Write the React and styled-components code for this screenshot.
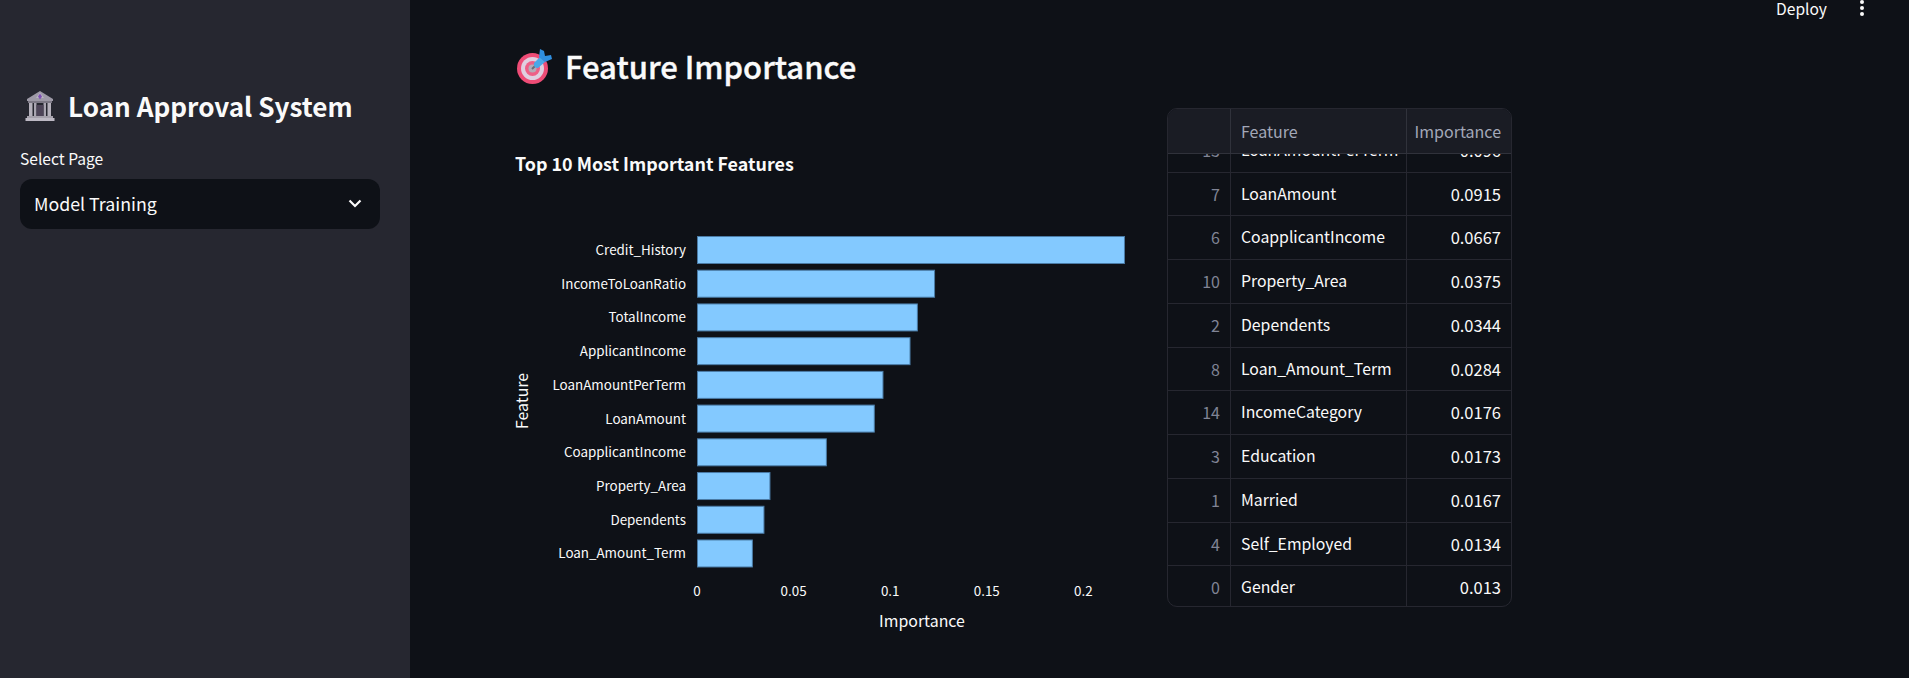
import React from "react";
import styled, { createGlobalStyle } from "styled-components";

const FONT = `"Noto Sans CJK SC", "Noto Sans", sans-serif`;

const features = [
  { name: "Credit_History", value: 0.221 },
  { name: "IncomeToLoanRatio", value: 0.1227 },
  { name: "TotalIncome", value: 0.1138 },
  { name: "ApplicantIncome", value: 0.11 },
  { name: "LoanAmountPerTerm", value: 0.096 },
  { name: "LoanAmount", value: 0.0915 },
  { name: "CoapplicantIncome", value: 0.0667 },
  { name: "Property_Area", value: 0.0375 },
  { name: "Dependents", value: 0.0344 },
  { name: "Loan_Amount_Term", value: 0.0284 },
];

const ticks = ["0", "0.05", "0.1", "0.15", "0.2"];

const rows = [
  [13, "LoanAmountPerTerm", "0.096"],
  [7, "LoanAmount", "0.0915"],
  [6, "CoapplicantIncome", "0.0667"],
  [10, "Property_Area", "0.0375"],
  [2, "Dependents", "0.0344"],
  [8, "Loan_Amount_Term", "0.0284"],
  [14, "IncomeCategory", "0.0176"],
  [3, "Education", "0.0173"],
  [1, "Married", "0.0167"],
  [4, "Self_Employed", "0.0134"],
  [0, "Gender", "0.013"],
];

const BankIcon = () => (
  <Emoji width="32" height="32" viewBox="0 0 32 32">
    <path d="M16 1 L29 9 L29 11 L3 11 L3 9 Z" fill="#9d99a6" />
    <path d="M16 2.5 L20 8 L12 8 Z" fill="#b9b5c0" />
    <path d="M16 3.5 L18 6.5 L16 9.5 L14 6.5 Z" fill="#7d4fb0" />
    <rect x="4" y="11" width="24" height="2" fill="#7c7885" />
    <rect x="5" y="13" width="3.5" height="13" fill="#b5b1bc" />
    <rect x="10" y="13" width="2.5" height="13" fill="#a9a5b1" />
    <rect x="19.5" y="13" width="2.5" height="13" fill="#a9a5b1" />
    <rect x="23.5" y="13" width="3.5" height="13" fill="#b5b1bc" />
    <rect x="12.5" y="15" width="7" height="11" fill="#4d4458" />
    <rect x="3" y="26" width="26" height="2" fill="#a5a1ac" />
    <rect x="1.5" y="28" width="29" height="3" fill="#bdb9c4" />
  </Emoji>
);

const TargetIcon = () => (
  <Emoji width="36" height="36" viewBox="0 0 36 36">
    <circle cx="15.5" cy="20.5" r="15.5" fill="#ee4c76" />
    <circle cx="15.5" cy="20.5" r="11.5" fill="#e0cfe0" />
    <circle cx="15.5" cy="20.5" r="7.5" fill="#ee5f86" />
    <circle cx="15.5" cy="20.5" r="4" fill="#b5abb8" />
    <path d="M15 21 L24 12" stroke="#6b6b78" strokeWidth="2" />
    <path d="M17 15 L23 9 L28 14 L21 20 Q16 20 17 15 Z" fill="#4aa8e8" />
    <path d="M22 9 L23 1 L27 3 L28 8 L34 7 L35 11 L28 14 Z" fill="#2f8fe0" />
  </Emoji>
);

const Chevron = () => (
  <svg width="20" height="20" viewBox="0 0 20 20" fill="none">
    <path d="M4.5 7.5 L10 13 L15.5 7.5" stroke="#fafafa" strokeWidth="2.2" />
  </svg>
);

const MenuDots = () => (
  <svg width="6" height="16" viewBox="0 0 6 16">
    <circle cx="3" cy="2" r="2" fill="#fafafa" />
    <circle cx="3" cy="8" r="2" fill="#fafafa" />
    <circle cx="3" cy="14" r="2" fill="#fafafa" />
  </svg>
);

// chart is 630 wide, bars start at X0 inside it
const X0 = 182;
const PER_UNIT = 1932;

const ImportanceChart = () => (
  <svg width="630" height="450" viewBox="0 0 630 450">
    <text className="axis-title" transform="translate(13 211) rotate(-90)" textAnchor="middle">
      Feature
    </text>
    {features.map((f, i) => {
      const y = 46.5 + i * 33.72;
      return (
        <g key={f.name}>
          <text x={X0 - 11} y={y + 18.5} textAnchor="end">
            {f.name}
          </text>
          <rect
            x={X0 + 0.5}
            y={y}
            width={f.value * PER_UNIT}
            height={27}
            fill="#83c9ff"
            stroke="#4a7ba6"
          />
        </g>
      );
    })}
    {ticks.map((t, i) => (
      <text key={t} x={X0 + i * 96.6} y={406} textAnchor="middle">
        {t}
      </text>
    ))}
    <text className="axis-title" x={407} y={437} textAnchor="middle">
      Importance
    </text>
  </svg>
);

export default function App() {
  return (
    <>
      <GlobalStyle />
      <Page>
        <Sidebar>
          <SideTitle>
            <BankIcon />
            Loan Approval System
          </SideTitle>
          <FieldLabel>Select Page</FieldLabel>
          <Select>
            Model Training
            <Chevron />
          </Select>
        </Sidebar>
        <Main>
          <Toolbar>
            <DeployLabel>Deploy</DeployLabel>
            <MenuDots />
          </Toolbar>
          <Content>
            <Title>
              <TargetIcon />
              Feature Importance
            </Title>
            <Columns>
              <ChartColumn>
                <ChartHeading>Top 10 Most Important Features</ChartHeading>
                <ChartBox>
                  <ImportanceChart />
                </ChartBox>
              </ChartColumn>
              <Table>
                <HeaderRow>
                  <HeadCell />
                  <HeadCell>Feature</HeadCell>
                  <HeadCell $right>Importance</HeadCell>
                </HeaderRow>
                <TableBody>
                  <TableRows>
                    {rows.map(([idx, name, value]) => (
                      <Row key={idx}>
                        <IndexCell>{idx}</IndexCell>
                        <Cell>{name}</Cell>
                        <Cell $right>{value}</Cell>
                      </Row>
                    ))}
                  </TableRows>
                </TableBody>
              </Table>
            </Columns>
          </Content>
        </Main>
      </Page>
    </>
  );
}

const GlobalStyle = createGlobalStyle`
  html, body {
    margin: 0;
    padding: 0;
    background: #0e1117;
  }
  body {
    font-family: ${FONT};
    color: #fafafa;
  }
`;

const Emoji = styled.svg`
  flex-shrink: 0;
`;

const Page = styled.div`
  display: flex;
  width: 1909px;
  height: 678px;
  overflow: hidden;
  background: #0e1117;
`;

const Sidebar = styled.aside`
  width: 410px;
  flex-shrink: 0;
  box-sizing: border-box;
  padding: 88px 30px 0 20px;
  background: #262730;
`;

const SideTitle = styled.h2`
  display: flex;
  align-items: center;
  gap: 12px;
  margin: 0 0 22px 4px;
  height: 36px;
  font-size: 26.1px;
  font-weight: 700;
  line-height: 36px;
  white-space: nowrap;
`;

const FieldLabel = styled.div`
  height: 25px;
  font-size: 15.6px;
  line-height: 25px;
`;

const Select = styled.div`
  display: flex;
  align-items: center;
  justify-content: space-between;
  height: 50px;
  box-sizing: border-box;
  margin-top: 8px;
  padding: 0 15px 2px 14px;
  border-radius: 12px;
  background: #0e1117;
  font-size: 17.8px;
`;

const Main = styled.main`
  flex: 1;
  min-width: 0;
`;

const Toolbar = styled.div`
  display: flex;
  align-items: center;
  justify-content: flex-end;
  gap: 32px;
  height: 16px;
  padding-right: 44px;
`;

const DeployLabel = styled.span`
  margin-top: -1px;
  font-size: 15.6px;
  line-height: 16px;
`;

const Content = styled.div`
  padding: 32px 0 0 105px;
`;

const Title = styled.h1`
  display: flex;
  align-items: center;
  gap: 12px;
  height: 36px;
  margin: 0 0 0 2px;
  font-size: 31px;
  font-weight: 500;
  -webkit-text-stroke: 0.4px #fafafa;
  line-height: 36px;
`;

const Columns = styled.div`
  display: flex;
  gap: 22px;
  margin-top: 24px;
`;

const ChartColumn = styled.div`
  width: 630px;
`;

const ChartHeading = styled.h3`
  margin: 44px 0 0;
  height: 22px;
  font-size: 17.9px;
  font-weight: 700;
  line-height: 22px;
`;

const ChartBox = styled.div`
  margin-top: 16px;

  svg {
    display: block;
  }

  text {
    fill: #fafafa;
    font-family: ${FONT};
    font-size: 13.4px;
  }

  text.axis-title {
    font-size: 15.9px;
  }
`;

const Table = styled.div`
  display: flex;
  flex-direction: column;
  width: 345px;
  height: 499px;
  box-sizing: border-box;
  border: 1px solid #262730;
  border-radius: 10px;
  overflow: hidden;
`;

const gridColumns = `grid-template-columns: 63px 176px 1fr;`;

const HeaderRow = styled.div`
  display: grid;
  ${gridColumns}
  flex-shrink: 0;
  height: 45px;
  box-sizing: border-box;
  border-bottom: 1px solid #30323b;
  background: #1a1c24;
`;

const HeadCell = styled.div`
  padding: 0 10px;
  border-right: 1px solid #30323b;
  color: #a3a8b8;
  font-size: 16px;
  line-height: 44px;
  text-align: ${(p) => (p.$right ? "right" : "left")};
  white-space: nowrap;

  &:last-child {
    padding-right: 10px;
    padding-left: 0;
    border-right: 0;
  }
`;

const TableBody = styled.div`
  flex: 1;
  min-height: 0;
  display: flex;
  flex-direction: column;
  justify-content: flex-end;
  overflow: hidden;
`;

const TableRows = styled.div`
  flex-shrink: 0;
  margin-bottom: -4px;
`;

const Row = styled.div`
  display: grid;
  ${gridColumns}
  height: 43.75px;
  box-sizing: border-box;
  border-bottom: 1px solid #262730;
`;

const Cell = styled.div`
  padding: 0 10px;
  border-right: 1px solid #262730;
  font-size: ${(p) => (p.$right ? "16.5px" : "15.8px")};
  line-height: 42px;
  text-align: ${(p) => (p.$right ? "right" : "left")};
  white-space: nowrap;

  &:last-child {
    border-right: 0;
  }
`;

const IndexCell = styled(Cell)`
  color: #808495;
  font-size: 16px;
  text-align: right;
`;
